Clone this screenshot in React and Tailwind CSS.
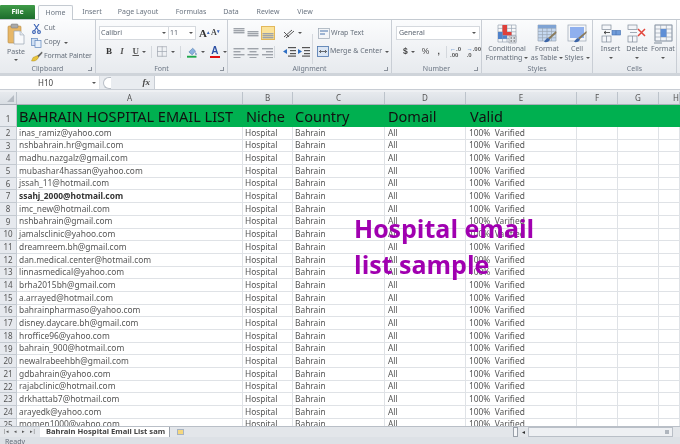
import React from "react";

const emails = ["inas_ramiz@yahoo.com","nshbahrain.hr@gmail.com","madhu.nazgalz@gmail.com","mubashar4hassan@yahoo.com","jssah_11@hotmail.com","ssahj_2000@hotmail.com","imc_new@hotmail.com","nshbahrain@gmail.com","jamalsclinic@yahoo.com","dreamreem.bh@gmail.com","dan.medical.center@hotmail.com","linnasmedical@yahoo.com","brha2015bh@gmail.com","a.arrayed@hotmail.com","bahrainpharmaso@yahoo.com","disney.daycare.bh@gmail.com","hroffice96@yahoo.com","bahrain_900@hotmail.com","newalrabeehbh@gmail.com","gdbahrain@yahoo.com","rajabclinic@hotmail.com","drkhattab7@hotmail.com","arayedk@yahoo.com","momen1000@yahoo.com"];

const cols = "grid grid-cols-[17px_226px_50px_92px_81px_111px_41px_41px_1fr]";
const ui = "font-['Noto_Sans',sans-serif]";

const Arrow = ({ className = "" }) => <span className={`inline-block w-0 h-0 border-x-[2px] border-x-transparent border-t-[2px] border-t-[#555] ${className}`} />;

const Sep = () => <span className="w-px h-[12px] bg-[#d4d8dd]" />;

const Lines = ({ align = "left", y = [2, 5, 8, 11] }) => (
  <svg width="12" height="12" viewBox="0 0 12 12">
    {y.map((v, i) => {
      const w = align === "full" || i % 2 === 0 ? 11 : 7;
      const x = align === "right" ? 12 - w : align === "center" ? (12 - w) / 2 : 0.5;
      return <rect key={i} x={x} y={v} width={w} height="1.4" fill="#9ea3aa" />;
    })}
  </svg>
);

const Indent = ({ flip }) => (
  <svg width="14" height="11" viewBox="0 0 14 11">
    <g fill="#555"><rect x="5" y="1" width="8" height="1.2"/><rect x="7" y="4" width="6" height="1.2"/><rect x="7" y="7" width="6" height="1.2"/><rect x="5" y="9.5" width="8" height="1.2"/></g>
    <path d={flip ? "M0 5.5 L4 3 V8 Z" : "M5 5.5 L1 3 V8 Z"} fill="#2d6fc4" />
  </svg>
);

const Group = ({ w, label, launcher, children }) => (
  <div style={{ width: w }} className="shrink-0 h-full flex flex-col border-r border-[#c9ced5] relative">
    <div className="h-[44px] relative flex">{children}</div>
    <div className="h-[10px] flex items-center justify-center text-[7px] leading-none text-[#6d7785]">{label}</div>
    {launcher && <span className="absolute right-[3px] bottom-[2px] w-[4px] h-[4px] border-r border-b border-[#8b929c]" />}
  </div>
);

const Big = ({ w, icon, l1, l2 }) => (
  <div style={{ width: w }} className="flex flex-col items-center shrink-0">
    <div className="h-[24px] flex items-end justify-center">{icon}</div>
    <div className="mt-[1px] text-[7px] leading-[8.5px] text-[#666f7b] text-center whitespace-nowrap">{l1}</div>
    <div className="text-[7px] leading-[8.5px] text-[#666f7b] text-center whitespace-nowrap flex items-center justify-center gap-[2px] h-[8.5px]">{l2}<Arrow /></div>
  </div>
);

const GridIcon = ({ children }) => (
  <svg width="20" height="20" viewBox="0 0 20 20">{children}</svg>
);
const cellLines = (x, y, w, h, n, m) => {
  const a = [];
  for (let i = 0; i <= n; i++) a.push(<path key={`h${i}`} d={`M${x} ${y + (h * i) / n}H${x + w}`} stroke="#9aa5b3" strokeWidth=".7" />);
  for (let i = 0; i <= m; i++) a.push(<path key={`v${i}`} d={`M${x + (w * i) / m} ${y}V${y + h}`} stroke="#9aa5b3" strokeWidth=".7" />);
  return a;
};

const Paste = () => (
  <svg width="18" height="22" viewBox="0 0 18 22">
    <rect x="1" y="3" width="13" height="17" rx="1" fill="#e7b767" stroke="#b58a45" strokeWidth=".6"/>
    <rect x="4" y="1" width="7" height="4" rx="1" fill="#a9a9a9" stroke="#777" strokeWidth=".5"/>
    <path d="M7 8h6l4 4v9H7z" fill="#f8f9fb" stroke="#9aa5b3" strokeWidth=".7"/>
    <path d="M13 8v4h4" fill="#dfe5ec" stroke="#9aa5b3" strokeWidth=".5"/>
  </svg>
);
const Cut = () => (
  <svg width="9" height="10" viewBox="0 0 9 10" fill="none" stroke="#3b63b5" strokeWidth="1.1">
    <path d="M2 0l4.500 6.500M7 0L2.500 6.500"/><circle cx="2" cy="8" r="1.4"/><circle cx="7" cy="8" r="1.4"/>
  </svg>
);
const Copy = () => (
  <svg width="11" height="10" viewBox="0 0 11 10">
    <rect x=".5" y=".5" width="6" height="7" fill="#cfdff3" stroke="#5f86bd" strokeWidth=".7"/>
    <rect x="4" y="2.500" width="6" height="7" fill="#e8f0fa" stroke="#5f86bd" strokeWidth=".7"/>
  </svg>
);
const Painter = () => (
  <svg width="12" height="11" viewBox="0 0 12 11">
    <path d="M11 .5L6 5l1.500 1.500L11.500 2z" fill="#666"/>
    <path d="M6.500 4.500L2 6.500 .5 10c3 .5 5.500-.5 7-3.500z" fill="#e8c33c" stroke="#a38417" strokeWidth=".4"/>
  </svg>
);

const CondFmt = () => (
  <GridIcon>
    {cellLines(1, 1, 18, 17, 5, 4)}
    <rect x="5.500" y="1" width="4.500" height="7" fill="#e0403a"/>
    <rect x="5.500" y="8" width="9" height="3.400" fill="#e0403a"/>
    <rect x="1" y="8" width="4.500" height="7" fill="#4f81c9"/>
    <rect x="5.500" y="11.400" width="4.500" height="3.400" fill="#4f81c9"/>
    <rect x="12" y="12" width="7" height="7" fill="#dfe3e8" stroke="#7f8792" strokeWidth=".5"/>
    <path d="M13.500 14h1.500M16.500 14h1.500M13.500 17h1.500M16.500 17h1.500" stroke="#555" strokeWidth="1"/>
  </GridIcon>
);
const FmtTable = () => (
  <GridIcon>
    <rect x="1" y="1" width="18" height="16" fill="#c6d9f0"/>
    {cellLines(1, 1, 18, 16, 5, 4)}
    <rect x="1" y="1" width="18" height="3.200" fill="#7fa3d3"/>
    <path d="M19 7L11 14l1.500 1.500L19.500 9z" fill="#8a7a5a"/>
    <path d="M11 14c-2 .5-2.500 2-4 4 3 .5 5.500-.5 6-2.500z" fill="#3c65a8"/>
  </GridIcon>
);
const CellSty = () => (
  <GridIcon>
    <rect x="1" y="1" width="18" height="16" fill="#f4f6f9" stroke="#9aa5b3" strokeWidth=".7"/>
    <rect x="3" y="3" width="14" height="11" fill="#8fb0ee"/>
    <path d="M19.500 7L11 14l1.500 1.500L19.500 9z" fill="#8a7a5a"/>
    <path d="M11 14c-2 .5-2.500 2-4 4 3 .5 5.500-.5 6-2.500z" fill="#3c65a8"/>
  </GridIcon>
);
const InsertI = () => (
  <GridIcon>
    <rect x="1" y="1" width="9" height="4.500" fill="#f4f6f9" stroke="#7f8b99" strokeWidth=".7"/>
    <rect x="1" y="12" width="9" height="6" fill="#f4f6f9" stroke="#7f8b99" strokeWidth=".7"/>
    <path d="M5.500 12v6" stroke="#7f8b99" strokeWidth=".7"/>
    <rect x="11" y="6.500" width="8.500" height="4.500" fill="#6f9bd8" stroke="#3f6cae" strokeWidth=".6"/>
    <path d="M15 6.500v4.500" stroke="#3f6cae" strokeWidth=".6"/>
    <path d="M3 8.500h6M5 7l-2 1.500L5 10" stroke="#333" strokeWidth=".8" fill="none"/>
  </GridIcon>
);
const DeleteI = () => (
  <GridIcon>
    <rect x="1" y="1" width="9" height="4.500" fill="#f4f6f9" stroke="#7f8b99" strokeWidth=".7"/>
    <rect x="1" y="12" width="9" height="6" fill="#f4f6f9" stroke="#7f8b99" strokeWidth=".7"/>
    <path d="M5.500 12v6M3 8.500h7" stroke="#7f8b99" strokeWidth=".7"/>
    <path d="M11 5l7 7M18 5l-7 7" stroke="#e2443a" strokeWidth="1.500"/>
  </GridIcon>
);
const FormatI = () => (
  <GridIcon>
    <rect x="2" y="1" width="17" height="16" fill="#f4f6f9" stroke="#7f8b99" strokeWidth=".7"/>
    {cellLines(2, 1, 17, 16, 4, 3)}
    <rect x="7.600" y="5" width="5.800" height="8" fill="#5f8fd6"/>
    <path d="M1 19h8" stroke="#7f8b99" strokeWidth="1"/>
  </GridIcon>
);

const ribbon = (
  <div className={`h-[54px] flex bg-gradient-to-b from-[#fbfcfd] to-[#e7eaee] border-t border-[#c4cad1] ${ui}`}>
    <Group w={96} label="Clipboard" launcher>
      <div className="w-[30px] ml-[1px] flex flex-col items-center pt-[3px]">
        <Paste />
        <span className="text-[7px] leading-[8px] text-[#666f7b] mt-[3px]">Paste</span>
        <Arrow className="mt-[3px]" />
      </div>
      <div className="flex flex-col pt-[3px] gap-[3px] text-[7px] text-[#666f7b]">
        <div className="h-[11px] flex items-center gap-[3px] pl-[1px]"><Cut /><span>Cut</span></div>
        <div className="h-[11px] flex items-center gap-[2px]"><Copy /><span>Copy</span><Arrow className="ml-[2px]" /></div>
        <div className="h-[11px] flex items-center gap-[1px] whitespace-nowrap"><Painter /><span className="tracking-[-0.1px]">Format Painter</span></div>
      </div>
    </Group>

    <Group w={132} label="Font" launcher>
      <div className="flex flex-col pl-[3px] w-full">
        <div className="flex items-center mt-[6px] h-[14px]">
          <div className="w-[70px] h-[14px] bg-white border border-[#d5d9de] flex items-center justify-between px-[1px] text-[7px] text-[#5d6672]"><span>Calibri</span><Arrow className="mr-[1px]" /></div>
          <div className="w-[27px] h-[14px] bg-white border border-l-0 border-[#d5d9de] flex items-center justify-between px-[1px] text-[7px] text-[#5d6672]"><span>11</span><Arrow className="mr-[1px]" /></div>
          <span className="ml-[3px] font-['Liberation_Serif',serif] font-bold text-[11px] leading-none text-[#333]">A<sup className="text-[5px] text-[#3b63b5]">▴</sup></span>
          <span className="ml-[1px] font-['Liberation_Serif',serif] font-bold text-[8px] leading-none text-[#444]">A<sup className="text-[5px] text-[#3b63b5]">▾</sup></span>
        </div>
        <div className="flex items-center mt-[5px] h-[13px] pl-[7px] font-['Liberation_Serif',serif] text-[9px] text-[#333]">
          <span className="w-[15px] font-bold">B</span>
          <span className="w-[13px] italic font-bold text-[#555]">I</span>
          <span className="w-[10px] underline font-bold text-[#555]">U</span>
          <Arrow className="mr-[5px]" /><Sep />
          <svg className="ml-[5px]" width="11" height="11" viewBox="0 0 11 11" fill="none" stroke="#a4aab3" strokeWidth=".8"><rect x=".5" y=".5" width="10" height="10"/><path d="M5.500 0v11M0 5.500h11"/></svg>
          <Arrow className="ml-[4px] mr-[5px]" /><Sep />
          <svg className="ml-[6px]" width="11" height="12" viewBox="0 0 11 12"><path d="M2 6l4-4 3 3-3.500 4z" fill="#8cb2dd" stroke="#4d79ad" strokeWidth=".6"/><path d="M9 6c1 1.500 1.500 2 1 3-.6.8-1.500 0-1-3z" fill="#4d79ad"/><rect x="0" y="10" width="10" height="2" fill="#1ea84a"/></svg>
          <Arrow className="ml-[3px] mr-[5px]" />
          <span className="relative w-[11px] text-center font-bold font-['Liberation_Sans',sans-serif] text-[10px] leading-[10px] text-[#2c4fa3] border-b-2 border-[#e01010]">A</span>
          <Arrow className="ml-[3px]" />
        </div>
      </div>
    </Group>

    <Group w={164} label="Alignment" launcher>
      <div className="flex flex-col pl-[5px] w-full">
        <div className="flex items-center mt-[6px] h-[14px]">
          <span className="w-[14px] flex"><Lines align="full" y={[1, 3, 5]} /></span>
          <span className="w-[14px] flex"><Lines align="full" y={[4, 6, 8]} /></span>
          <span className="w-[14px] h-[14px] flex items-center justify-center bg-[#fbe39a] border border-[#e2b85c]"><Lines align="full" y={[6, 8, 10]} /></span>
          <span className="w-[8px]" />
          <svg width="14" height="11" viewBox="0 0 14 11" fill="none" stroke="#555" strokeWidth="1"><path d="M1 9l8-7M3 10l8-7M1 4l5 5"/></svg>
          <Arrow className="ml-[1px]" />
          <span className="ml-[10px] w-px h-[30px] -mb-[16px] mt-[16px] bg-[#d4d8dd]" />
          <svg className="ml-[5px]" width="12" height="11" viewBox="0 0 12 11"><rect x=".5" y=".5" width="11" height="10" fill="#f3f5f8" stroke="#9aa5b3" strokeWidth=".7"/><path d="M2 3h8M2 6h5" stroke="#4a74ad" strokeWidth="1"/></svg>
          <span className="ml-[1px] text-[7px] text-[#666f7b] whitespace-nowrap">Wrap Text</span>
        </div>
        <div className="flex items-center mt-[5px] h-[13px]">
          <span className="w-[14px] flex"><Lines align="left" /></span>
          <span className="w-[14px] flex"><Lines align="center" /></span>
          <span className="w-[14px] flex"><Lines align="right" /></span>
          <span className="mr-[2px] -ml-[1px] w-px h-[12px] bg-[#d4d8dd]" />
          <span className="ml-[6px]"><Indent flip /></span>
          <span><Indent /></span>
          <svg className="ml-[6px]" width="12" height="11" viewBox="0 0 12 11"><rect x=".5" y=".5" width="11" height="10" fill="#dbe6f4" stroke="#4a74ad" strokeWidth=".8"/><path d="M2.500 5.500h7M4 4L2.500 5.500 4 7M8 4l1.500 1.500L8 7" stroke="#333" strokeWidth=".7" fill="none"/></svg>
          <span className="ml-[1px] text-[7px] text-[#666f7b] whitespace-nowrap">Merge &amp; Center</span>
          <Arrow className="ml-[3px]" />
        </div>
      </div>
    </Group>

    <Group w={90} label="Number" launcher>
      <div className="flex flex-col pl-[4px] w-full">
        <div className="mt-[6px] h-[14px] w-[84px] bg-white border border-[#d5d9de] flex items-center justify-between pl-[2px] pr-[3px] text-[7px] text-[#5d6672]"><span>General</span><Arrow /></div>
        <div className="flex items-center mt-[5px] h-[13px] pl-[7px] text-[8.500px] text-[#444] font-bold font-['Liberation_Sans',sans-serif]">
          <span className="w-[8px]">$</span><Arrow className="mr-[7px]" />
          <span className="w-[16px] font-normal">%</span>
          <span className="w-[9px]">,</span>
          <Sep />
          <span className="ml-[3px] w-[17px] text-[6px] leading-[6px] text-[#555]"><span className="text-[#2d6fc4]">←</span>.0<br />.00</span>
          <span className="text-[6px] leading-[6px] text-[#555]"><span className="text-[#2d6fc4]">→</span>.00<br />.0</span>
        </div>
      </div>
    </Group>

    <Group w={111} label="Styles">
      <div className="flex pl-[2px]">
        <Big w={46} icon={<CondFmt />} l1="Conditional" l2="Formatting" />
        <Big w={34} icon={<FmtTable />} l1="Format" l2="as Table" />
        <Big w={26} icon={<CellSty />} l1="Cell" l2="Styles" />
      </div>
    </Group>

    <Group w={84} label="Cells">
      <div className="flex pl-[4px]">
        <Big w={27} icon={<InsertI />} l1="Insert" l2="" />
        <Big w={26} icon={<DeleteI />} l1="Delete" l2="" />
        <Big w={26} icon={<FormatI />} l1="Format" l2="" />
      </div>
    </Group>
  </div>
);

const Cell = ({ children, className = "" }) => (
  <div className={`border-r border-b border-[#dfe2e6] pl-[2px] pr-0 flex items-center overflow-hidden whitespace-nowrap ${className}`}>{children}</div>
);

export default function App() {
  return (
    <div className={`relative w-[680px] h-[444px] overflow-hidden bg-white flex flex-col blur-[0.35px] ${ui}`}>
      <div className="h-[4px] bg-white" />
      <div className="h-[15px] flex items-end bg-white text-[7px] text-[#6a7480]">
        <div className="w-[35px] h-[14.500px] bg-gradient-to-b from-[#3f9b48] to-[#1d6d2c] text-white font-bold flex items-center justify-center rounded-t-[1px]">File</div>
        <div className="ml-[3px] w-[35px] h-[15px] bg-[#fbfcfd] border border-b-0 border-[#c4cad1] rounded-t-[2px] flex items-center justify-center -mb-px z-10">Home</div>
        <div className="w-[38px] h-[14px] flex items-center justify-center">Insert</div>
        <div className="w-[54px] h-[14px] flex items-center justify-center whitespace-nowrap">Page Layout</div>
        <div className="w-[52px] h-[14px] flex items-center justify-center">Formulas</div>
        <div className="w-[28px] h-[14px] flex items-center justify-center">Data</div>
        <div className="w-[46px] h-[14px] flex items-center justify-center">Review</div>
        <div className="w-[28px] h-[14px] flex items-center justify-center">View</div>
      </div>
      {ribbon}
      <div className="h-[3px] bg-[#cfd4da]" />
      <div className="h-[14px] flex bg-white text-[8px] text-[#444] border-b border-[#c8cdd4]">
        <div className="w-[100px] flex items-center justify-between pl-[38px] pr-[3px] border-r border-[#dfe2e6]"><span>H10</span><Arrow /></div>
        <div className="w-[55px] bg-[#e9ecf0] flex items-center justify-between pl-[3px] pr-[4px] border-r border-[#c8cdd4]">
          <span className="w-[8px] h-[12px] rounded-l-full border border-r-0 border-[#b9bfc7] bg-white" />
          <span className="font-['Liberation_Serif',serif] italic font-bold text-[9px]">fx</span>
        </div>
        <div className="flex-1" />
      </div>
      <div className="h-[2px] bg-[#eef0f3]" />
      <div className="relative h-[334px] overflow-hidden flex flex-col">
        <div className={`${cols} h-[13px] bg-gradient-to-b from-[#e7eaee] to-[#d9dee4] text-[8px] text-[#555] shrink-0 border-b border-[#a9b0b9]`}>
          <div className="border-r border-[#bcc3cb] flex items-end justify-end p-[2px]"><span className="w-0 h-0 border-l-[7px] border-l-transparent border-b-[7px] border-b-[#b5bbc3]" /></div>
          {["A","B","C","D","E","F","G","H"].map((c) => (
            <div key={c} className={`border-r border-[#bcc3cb] flex items-center justify-center ${c === "H" ? "justify-start pl-[14px]" : ""}`}>{c}</div>
          ))}
        </div>
        <div className={`${cols} h-[22px] shrink-0 text-[14.500px] text-[#111] leading-none`}>
          <div className="bg-[#e6e9ee] border-r border-b border-[#bcc3cb] flex items-end justify-center pb-[3px] text-[8px] text-[#555]">1</div>
          <div className="bg-[#00b050] flex items-center pl-[2px] whitespace-nowrap">BAHRAIN HOSPITAL EMAIL LIST</div>
          <div className="bg-[#00b050] flex items-center pl-[3px]">Niche</div>
          <div className="bg-[#00b050] flex items-center pl-[2px]">Country</div>
          <div className="bg-[#00b050] flex items-center pl-[3px]">Domail</div>
          <div className="bg-[#00b050] flex items-center pl-[4px]">Valid</div>
          <div className="bg-[#00b050]" />
          <div className="bg-[#00b050]" />
          <div className="bg-[#00b050]" />
        </div>
        {emails.map((e, i) => (
          <div key={e} className={`${cols} h-[12.700px] shrink-0 text-[8.400px] text-[#555] leading-none`}>
            <div className="bg-[#e6e9ee] border-r border-b border-[#c4cad1] flex items-center justify-center text-[8px]">{i + 2}</div>
            <Cell className={i === 5 ? "font-bold text-[#333]" : ""}>{e}</Cell>
            <Cell>Hospital</Cell>
            <Cell>Bahrain</Cell>
            <Cell><span className="pl-[1px]">All</span></Cell>
            <Cell><span className="pl-[1px]">100%&nbsp;&nbsp;Varified</span></Cell>
            <Cell /><Cell /><Cell />
          </div>
        ))}
        <div className="absolute left-[354px] top-[118px] w-[200px] text-[25px] leading-[36px] font-bold text-[#a000b0] font-['Open_Sans',sans-serif]">Hospital email list sample</div>
      </div>
      <div className="h-[11px] shrink-0 flex items-stretch bg-[#e3e6ea] border-t border-[#b9bfc7] text-[7.600px] text-[#555]">
        <div className="w-[40px] flex items-center justify-start pl-[3px] gap-[5px] text-[5px]"><span>|◂</span><span>◂</span><span>▸</span><span>▸|</span></div>
        <div className="w-[130px] bg-white font-bold text-[#444] flex items-center pl-[6px] whitespace-nowrap border-r border-[#9aa1aa]">Bahrain Hospital Email List sam</div>
        <div className="w-[20px] flex items-center justify-center"><span className="w-[7px] h-[6px] bg-[#f5d77e] border border-[#a7b3c2]" /></div>
        <div className="w-[323px]" />
        <div className="w-[5px] bg-[#f5f6f8] border border-[#9aa1aa]" />
        <div className="w-[10px] flex items-center justify-center text-[6px] text-[#333]">◂</div>
        <div className="w-[145px] bg-[#eef0f3] border border-[#b9bfc7] flex items-center justify-end pr-[3px]"><span className="w-[4px] h-[4px] bg-[#b0b6be]" /></div>
      </div>
      <div className="h-[7px] shrink-0 flex items-center bg-[#dde1e6] text-[7px] leading-none text-[#666f7b] pl-[5px] pt-[2px]">Ready</div>
    </div>
  );
}
